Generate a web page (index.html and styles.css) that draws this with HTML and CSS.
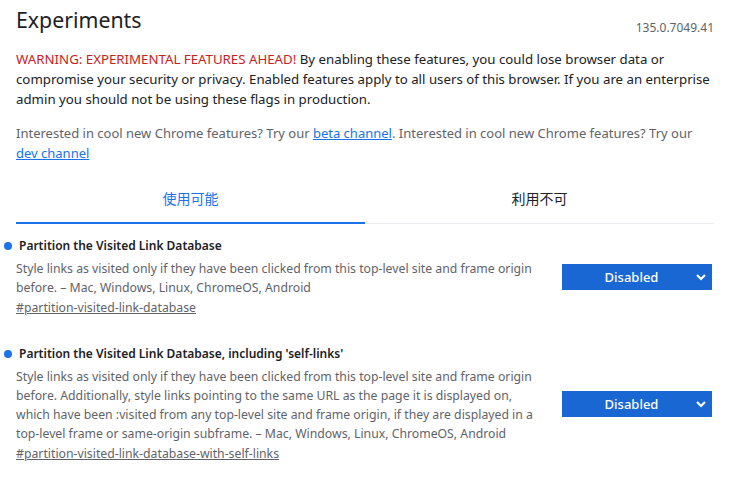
FILE: index.html
```html
<!DOCTYPE html>
<html lang="ja">

<head>
    <title>Experiments</title>
    <meta name="viewport" content="initial-scale=1, width=device-width">
    <link rel="stylesheet" href="styles.css">
</head>

<body>
    <div class="page">
        <div class="header">
            <h1>Experiments</h1>
            <span class="version">135.0.7049.41</span>
        </div>

        <p class="blurb">
            <span class="warning">WARNING: EXPERIMENTAL FEATURES AHEAD!</span> By enabling these features, you could lose browser data or compromise your security or privacy. Enabled features apply to all users of this browser. If you are an enterprise admin you should not be using these flags in production.
        </p>

        <p class="channel">
            Interested in cool new Chrome features? Try our <a href="#">beta channel</a>. Interested in cool new Chrome features? Try our <a href="#">dev channel</a>
        </p>

        <div class="tabs">
            <div class="tab active">使用可能</div>
            <div class="tab">利用不可</div>
        </div>

        <div class="experiment">
            <div class="experiment-text">
                <h2><span class="dot"></span>Partition the Visited Link Database</h2>
                <p class="desc">Style links as visited only if they have been clicked from this top-level site and frame origin before. – Mac, Windows, Linux, ChromeOS, Android</p>
                <a class="perma" href="#">#partition-visited-link-database</a>
            </div>
            <div class="select">
                <span>Disabled</span>
                <svg width="12" height="8" viewBox="0 0 12 8"><path d="M2 2l4 4 4-4" fill="none" stroke="#fff" stroke-width="2.2"/></svg>
            </div>
        </div>

        <div class="experiment">
            <div class="experiment-text">
                <h2><span class="dot"></span>Partition the Visited Link Database, including 'self-links'</h2>
                <p class="desc">Style links as visited only if they have been clicked from this top-level site and frame origin before. Additionally, style links pointing to the same URL as the page it is displayed on, which have been :visited from any top-level site and frame origin, if they are displayed in a top-level frame or same-origin subframe. – Mac, Windows, Linux, ChromeOS, Android</p>
                <a class="perma" href="#">#partition-visited-link-database-with-self-links</a>
            </div>
            <div class="select">
                <span>Disabled</span>
                <svg width="12" height="8" viewBox="0 0 12 8"><path d="M2 2l4 4 4-4" fill="none" stroke="#fff" stroke-width="2.2"/></svg>
            </div>
        </div>
    </div>
</body>
</html>
```

FILE: styles.css
```css
* {
    box-sizing: border-box;
}

html,
body {
    margin: 0;
    padding: 0;
    background-color: #fff;
    color: #5f6368;
    font-family: "Noto Sans", "Noto Sans CJK JP", sans-serif;
    font-size: 13px;
}

.page {
    padding: 0 16px;
}

.header {
    display: flex;
    justify-content: space-between;
    align-items: flex-end;
    height: 40px;
}

h1 {
    margin: 0;
    font-size: 21.3px;
    font-weight: 400;
    color: #202124;
    line-height: 40px;
}

.version {
    font-size: 12px;
    color: #5f6368;
    line-height: 18px;
    margin-bottom: 3px;
}

.blurb {
    margin: 9px 0 0;
    font-size: 13.25px;
    line-height: 20px;
    color: #202124;
}

.warning {
    color: #c5221f;
}

.channel {
    margin: 15px 0 0;
    font-size: 13px;
    line-height: 19.5px;
}

a {
    color: #1a73e8;
}

.tabs {
    display: flex;
    margin-top: 21px;
    border-bottom: 1px solid #e8eaed;
}

.tab {
    flex: 1;
    text-align: center;
    font-size: 14px;
    line-height: 20px;
    padding: 5px 0 13px;
    color: #202124;
    border-bottom: 2px solid transparent;
    margin-bottom: -1px;
}

.tab.active {
    color: #1a73e8;
    border-bottom-color: #1a73e8;
}

.experiment {
    display: flex;
    align-items: center;
    justify-content: space-between;
    padding: 12px 0 8px;
}

.experiment + .experiment {
    padding-top: 18px;
}

.experiment-text {
    width: 530px;
}

h2 {
    margin: 0 0 3px 3px;
    font-size: 12px;
    font-weight: 600;
    color: #202124;
    line-height: 20px;
}

.dot {
    display: inline-block;
    width: 8px;
    height: 8px;
    border-radius: 50%;
    background-color: #1a73e8;
    margin-left: -15px;
    margin-right: 7px;
}

.desc {
    margin: 0;
    font-size: 12.25px;
    line-height: 19px;
}

.perma {
    display: inline-block;
    margin-top: 1px;
    font-size: 12.25px;
    line-height: 20px;
    color: #5f6368;
}

.select {
    width: 150px;
    height: 26px;
    background-color: #1967d2;
    color: #fff;
    display: flex;
    align-items: center;
    justify-content: space-between;
    padding: 0 5px 0 0;
    font-size: 13px;
    font-weight: 500;
    margin-right: 2px;
}

.select span {
    flex: 1;
    text-align: center;
    padding-left: 6px;
}
```
